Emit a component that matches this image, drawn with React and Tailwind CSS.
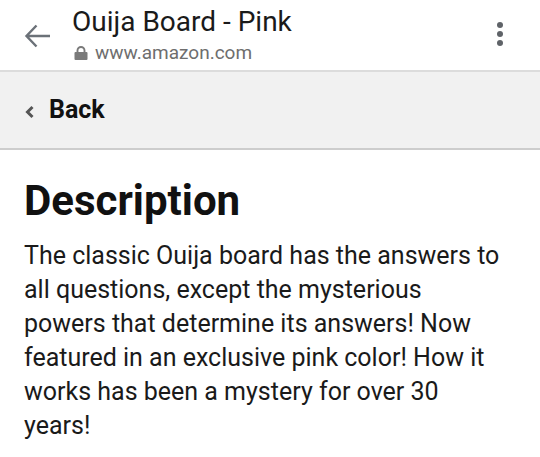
import React from 'react';

const App = () => {
  return (
    <div className="w-[540px] h-[457px] bg-white overflow-hidden" style={{ fontFamily: 'Roboto, sans-serif' }}>
      {/* top bar */}
      <div className="h-[72px] flex border-b-2 border-[#dcdcdc]">
        <div className="w-[72px] pl-[24px] pt-[24px]">
          <svg width="27" height="24" viewBox="0 0 27 24" fill="none" stroke="#6b7178" strokeWidth="2.4">
            <path d="M26 12H2.5M12.5 1.5L2.5 12l10 10.5" />
          </svg>
        </div>
        <div className="flex-1 flex flex-col pt-[6px]">
          <div className="text-[28px] leading-[32px] text-[#1a1a1a]">Ouija Board - Pink</div>
          <div className="mt-[3px] flex items-center gap-[7px] text-[19px] leading-[24px] text-[#6e6e6e] pl-[2px]">
            <svg width="14" height="14" viewBox="0 0 14 14">
              <path d="M3.5 7V4.5a3.5 3.5 0 0 1 7 0V7" fill="none" stroke="#7a7a7a" strokeWidth="1.9" />
              <rect x="0.5" y="6" width="13" height="8" rx="1" fill="#7a7a7a" />
            </svg>
            <span>www.amazon.com</span>
          </div>
        </div>
        <div className="w-[40px] flex flex-col items-center gap-[3px] mr-[20px] pt-[22px]">
          <span className="w-[6px] h-[6px] rounded-full bg-[#5f6368]" />
          <span className="w-[6px] h-[6px] rounded-full bg-[#5f6368]" />
          <span className="w-[6px] h-[6px] rounded-full bg-[#5f6368]" />
        </div>
      </div>

      {/* back bar */}
      <div className="h-[78px] bg-[#f1f1f1] border-b-2 border-[#cdcdcd] flex items-center pl-[24px]">
        <svg width="11" height="14" viewBox="0 0 11 14" className="mr-[14px] mt-[3px]">
          <path d="M8.5 2L3.5 7L8.5 12" fill="none" stroke="#555" strokeWidth="3" />
        </svg>
        <span className="text-[25px] font-bold text-[#111]">Back</span>
      </div>

      {/* description */}
      <div className="pl-[24px] pt-[28px]">
        <h1 className="text-[42px] leading-[46px] font-bold text-[#111]">Description</h1>
        <p className="w-[482px] mt-[15px] text-[25px] leading-[34px] text-[#1a1a1a]">
          The classic Ouija board has the answers to all questions, except the mysterious powers that determine its answers! Now featured in an exclusive pink color! How it works has been a mystery for over 30 years!
        </p>
      </div>
    </div>
  );
};

export default App;
